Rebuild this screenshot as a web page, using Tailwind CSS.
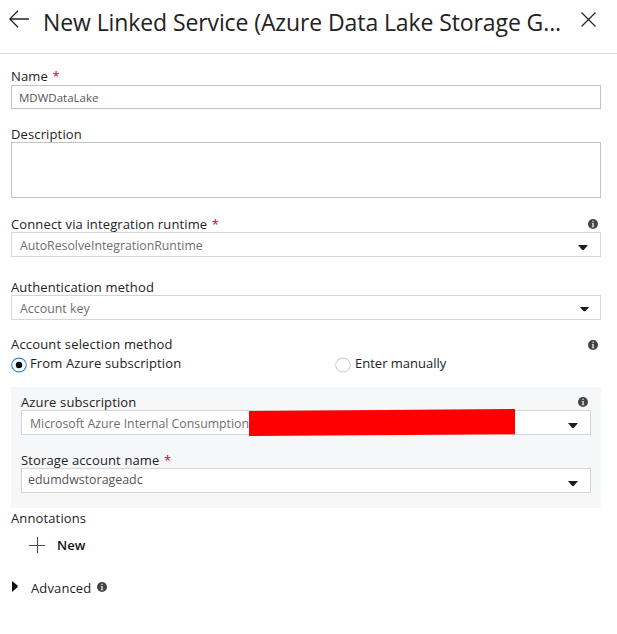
<!DOCTYPE html>
<html lang="en">
<head>
<meta charset="utf-8">
<title>New Linked Service</title>
<script src="https://cdn.jsdelivr.net/npm/@tailwindcss/browser@4"></script>
</head>
<body class="bg-white font-['Open_Sans','Noto_Sans',sans-serif] text-[13px] leading-5 tracking-[0.13px] text-[#222] whitespace-nowrap overflow-hidden">
<svg class="hidden">
  <symbol id="info" viewBox="0 0 10 10"><circle cx="5" cy="5" r="5" fill="#444"/><path d="M4.3 1.8h1.5v1.3H4.3zM3.8 4h2v3.4h.5v.8H3.7v-.8h.6V4.8h-.5z" fill="#d8d8d8"/></symbol>
  <symbol id="caret" viewBox="0 0 10 5"><path d="M0 0h10L6.2 4.4Q5 5.4 3.8 4.4z" fill="#1c1c1c"/></symbol>
</svg>
<header class="flex h-[54px] border-b border-[#d9d9d9]">
  <svg class="ml-[9px] mt-[10px] h-[18px] w-5 shrink-0" viewBox="0 0 20 18" fill="none" stroke="#222" stroke-width="1.3"><path d="M20 9H.8M9 .7.8 9 9 17.3"/></svg>
  <h1 class="ml-[14px] mt-[6px] w-[538px] text-[23px] leading-8 tracking-[-0.1px]">New Linked Service (Azure Data Lake Storage G...</h1>
  <svg class="mt-[12px] h-[15px] w-[15px] shrink-0" viewBox="0 0 15 15" stroke="#222" stroke-width="1.15"><path d="M.5.5l14 14M14.5.5l-14 14"/></svg>
</header>
<main class="ml-[11px] flex w-[590px] flex-col pt-3">
  <label class="h-[19px]">Name <span class="ml-px text-[#b0102a]">*</span></label>
  <div class="h-6 border border-[#c3c3c3] pl-[7px] text-[11.5px] leading-[23px] tracking-normal text-[#555]">MDWDataLake</div>

  <label class="mt-[15px] h-[18px]">Description</label>
  <div class="h-14 border border-[#c3c3c3]"></div>

  <div class="mt-4 flex h-[18px] justify-between pr-[3px]"><label>Connect via integration runtime <span class="ml-px text-[#b0102a]">*</span></label><svg class="mt-[5px] size-[10px]"><use href="#info"/></svg></div>
  <div class="flex h-[25px] justify-between border border-[#d6d6d6] pl-2 pr-[12px] text-[12.3px] leading-[26px] tracking-normal text-[#6e6e6e]"><span>AutoResolveIntegrationRuntime</span><svg class="mt-[12px] h-[5px] w-[10px]"><use href="#caret"/></svg></div>

  <label class="mt-5 h-[18px]">Authentication method</label>
  <div class="flex h-[25px] justify-between border border-[#d6d6d6] pl-2 pr-[11px] text-[12.4px] leading-[26px] tracking-normal text-[#6e6e6e]"><span>Account key</span><svg class="mt-[11px] h-[4.5px] w-[9px]"><use href="#caret"/></svg></div>

  <div class="mt-[14px] flex h-5 justify-between pr-[3px]"><label class="tracking-[0.17px]">Account selection method</label><svg class="mt-[6px] size-[10px]"><use href="#info"/></svg></div>
  <div class="flex h-[33px]">
    <div class="flex w-[324px]"><svg class="mt-[3px] h-4 w-4" viewBox="0 0 16 16"><ellipse cx="8" cy="8" rx="7.3" ry="6.9" fill="#fff" stroke="#2b88d8" stroke-width="1.1"/><circle cx="8" cy="8" r="3.2" fill="#000"/></svg><span class="-mt-px ml-[3px]">From Azure subscription</span></div>
    <svg class="mt-[3px] h-4 w-4" viewBox="0 0 16 16"><ellipse cx="8" cy="8" rx="7.3" ry="6.9" fill="#fff" stroke="#d2d2d2" stroke-width="1.1"/></svg><span class="-mt-px ml-[4px] tracking-normal">Enter manually</span>
  </div>

  <section class="h-[121px] bg-[#f6f7f9] px-[10px] pt-[5px]">
    <div class="flex h-[18px] justify-between pr-[3px]"><label>Azure subscription</label><svg class="mt-[5px] size-[10px]"><use href="#info"/></svg></div>
    <div class="relative flex h-[25px] justify-between border border-[#d6d6d6] bg-white pl-2 pr-[12px] text-[12.3px] leading-[26px] tracking-normal text-[#6e6e6e]"><span>Microsoft Azure Internal Consumption</span><svg class="mt-[12px] h-[5px] w-[10px]"><use href="#caret"/></svg>
      <svg class="absolute -top-[2px] left-[227px] h-[27px] w-[266px]" viewBox="0 0 266 27"><path d="M0 2 266 0V25.2L0 27z" fill="#f00"/></svg>
    </div>
    <div class="mt-[15px] h-[18px]"><label>Storage account name <span class="ml-px text-[#b0102a]">*</span></label></div>
    <div class="flex h-[25px] justify-between border border-[#d6d6d6] bg-white pl-[6px] pr-[12px] text-[12.4px] leading-[22px] tracking-normal text-[#555]"><span>edumdwstorageadc</span><svg class="mt-[12px] h-[5px] w-[10px]"><use href="#caret"/></svg></div>
  </section>

  <label class="h-[27px]">Annotations</label>
  <div class="flex h-[43px]"><svg class="ml-[18px] mt-[2px] size-4" viewBox="0 0 16 16" stroke="#4a4a4a" stroke-width="1.1"><path d="M0 8.5h16M8.5 0v16"/></svg><span class="ml-3 font-semibold tracking-normal text-[#111]">New</span></div>
  <div class="flex h-5"><svg class="ml-px mt-[3px] h-[11px] w-[6px]" viewBox="0 0 6 11"><path d="M0 0l5.6 4.6v1.6L0 11z" fill="#111"/></svg><span class="ml-[13px]">Advanced</span><svg class="ml-[6px] mt-[4px] size-[10px]"><use href="#info"/></svg></div>
</main>
</body>
</html>
